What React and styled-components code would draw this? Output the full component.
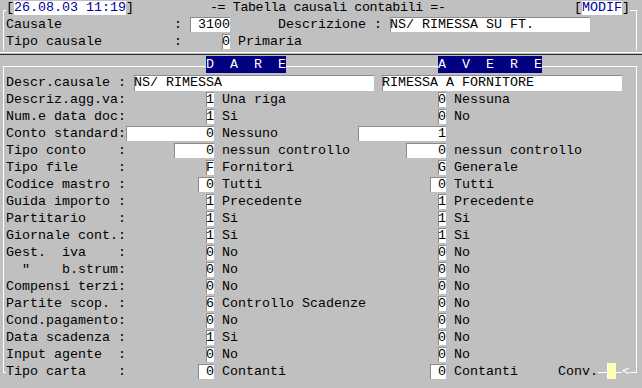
import styled, { createGlobalStyle } from "styled-components"

const CH = 8
const w = (n) => `${n * CH}px`

const GlobalStyle = createGlobalStyle`
  html, body {
    margin: 0;
    padding: 0;
    background: #c0c0c0;
  }
  body {
    font-family: "Liberation Mono", "Courier New", monospace;
    font-size: 13.333px;
    line-height: 17px;
    color: #000;
  }
`

const Screen = styled.div`
  width: 642px;
  height: 388px;
  overflow: hidden;
  background: #c0c0c0;
`

const TopFrame = styled.div`
  margin: 10px 5px 0 3px;
  border: 1px solid #fff;
  border-bottom: none;
  padding-left: 2px;
`

const TitleRow = styled.div`
  display: flex;
  align-items: center;
  height: 16px;
  line-height: 16px;
  margin: -11px 6px 0 0;
  background: #c0c0c0;
  white-space: pre;
`

const Mark = styled.span`
  display: inline-block;
  height: 14px;
  line-height: 14px;
  background: #fff;
  color: #0000a0;
`

const Title = styled.span`
  margin-left: 76px;
  letter-spacing: -0.4px;
`

const Push = styled.span`
  margin-left: auto;
`

const Row = styled.div`
  display: flex;
  align-items: center;
  height: 17px;
  white-space: pre;
`

const Txt = styled.span`
  display: inline-block;
  flex: none;
  width: ${(p) => (p.$w ? w(p.$w) : "auto")};
  white-space: pre;
  color: ${(p) => p.$color || "inherit"};
`

const Field = styled.span`
  display: inline-block;
  flex: none;
  width: ${(p) => w(p.$w)};
  height: ${(p) => (p.$tall ? 16 : 15)}px;
  line-height: ${(p) => (p.$tall ? 16 : 15)}px;
  background: #fff;
  text-align: ${(p) => (p.$left ? "left" : "right")};
  box-shadow: inset 1px 1px 0 #8c8c8c;
  white-space: pre;
  overflow: hidden;
`

const Separator = styled.div`
  margin-top: 2px;
  height: 1px;
  border-top: 1px solid #fff;
  border-bottom: 1px solid #2a2a2a;
`

const MainFrame = styled.div`
  margin: 11px 5px 0 3px;
  border: 1px solid #fff;
  border-bottom: none;
  padding-left: 2px;
`

const HeaderRow = styled.div`
  display: flex;
  align-items: flex-start;
  height: 18px;
  margin-top: -11px;
`

const Tag = styled.span`
  display: inline-block;
  margin-left: ${(p) => w(p.$at)};
  width: ${(p) => w(p.$w)};
  height: 17px;
  line-height: 17px;
  background: #000080;
  color: #fff;
  white-space: pre;
`

const DataRow = styled.div`
  display: grid;
  grid-template-columns: 120px 88px 144px 88px 1fr;
  align-items: center;
  height: 17px;
  flex: 1;
`

const ValCell = styled.div`
  display: flex;
  justify-content: flex-end;
  align-items: center;
  min-width: 0;
`

const Desc = styled.span`
  padding-left: 8px;
  white-space: pre;
  min-width: 0;
  overflow: visible;
`

const FooterRow = styled.div`
  display: flex;
  align-items: center;
  height: 17px;
  margin: 0 5px 0 3px;
`

const Corner = styled.span`
  flex: none;
  align-self: flex-start;
  box-sizing: border-box;
  width: ${(p) => p.$w}px;
  height: 10px;
  border-bottom: 1px solid #fff;
  border-left: ${(p) => (p.$side === "left" ? "1px solid #fff" : "none")};
  border-right: ${(p) => (p.$side === "right" ? "1px solid #fff" : "none")};
`

const Tail = styled.div`
  display: flex;
  align-items: center;
  height: 17px;
  flex: none;
`

const Lamp = styled.span`
  flex: none;
  align-self: flex-start;
  width: 9px;
  height: 16px;
  background: #ffffb4;
  box-shadow: inset 1px 0 0 #fffff0;
`

const rows = [
  ["Descriz.agg.va:", "1", 1, "Una riga", "0", 1, "Nessuna"],
  ["Num.e data doc:", "1", 1, "Si", "0", 1, "No"],
  ["Conto standard:", "0", 11, "Nessuno", "1", 11, ""],
  ["Tipo conto    :", "0", 5, "nessun controllo", "0", 5, "nessun controllo"],
  ["Tipo file     :", "F", 1, "Fornitori", "G", 1, "Generale"],
  ["Codice mastro :", "0", 2, "Tutti", "0", 2, "Tutti"],
  ["Guida importo :", "1", 1, "Precedente", "1", 1, "Precedente"],
  ["Partitario    :", "1", 1, "Si", "1", 1, "Si"],
  ["Giornale cont.:", "1", 1, "Si", "1", 1, "Si"],
  ["Gest.  iva    :", "0", 1, "No", "0", 1, "No"],
  ['  "    b.strum:', "0", 1, "No", "0", 1, "No"],
  ["Compensi terzi:", "0", 1, "No", "0", 1, "No"],
  ["Partite scop. :", "6", 1, "Controllo Scadenze", "0", 1, "No"],
  ["Cond.pagamento:", "0", 1, "No", "0", 1, "No"],
  ["Data scadenza :", "1", 1, "Si", "0", 1, "No"],
  ["Input agente  :", "0", 1, "No", "0", 1, "No"],
]

function Line({ r }) {
  const [label, dv, dw, dd, av, aw, ad] = r
  return (
    <DataRow>
      <Txt>{label}</Txt>
      <ValCell>
        <Field $w={dw}>{dv}</Field>
      </ValCell>
      <Desc>{dd}</Desc>
      <ValCell>
        <Field $w={aw}>{av}</Field>
      </ValCell>
      <Desc>{ad}</Desc>
    </DataRow>
  )
}

export default function App() {
  return (
    <Screen>
      <GlobalStyle />
      <TopFrame>
        <TitleRow>
          <Txt>[</Txt>
          <Mark>26.08.03 11:19</Mark>
          <Txt>]</Txt>
          <Title>-= Tabella causali contabili =-</Title>
          <Push>[</Push>
          <Mark>MODIF</Mark>
          <Txt>]</Txt>
        </TitleRow>
        <Row>
          <Txt $w={21}>Causale</Txt>
          <Txt $w={2}>:</Txt>
          <Field $w={5}>3100</Field>
          <Txt $w={6}></Txt>
          <Txt $w={14}>Descrizione :</Txt>
          <Field $w={25} $left>NS/ RIMESSA SU FT.</Field>
        </Row>
        <Row>
          <Txt $w={21}>Tipo causale</Txt>
          <Txt $w={6}>:</Txt>
          <Field $w={1}>0</Field>
          <Txt $w={1}></Txt>
          <Txt>Primaria</Txt>
        </Row>
      </TopFrame>
      <Separator />
      <MainFrame>
        <HeaderRow>
          <Tag $at={25} $w={10}>D  A  R  E</Tag>
          <Tag $at={19} $w={13}>A  V  E  R  E</Tag>
        </HeaderRow>
        <Row>
          <Txt $w={16}>Descr.causale :</Txt>
          <Field $w={30} $left $tall>NS/ RIMESSA</Field>
          <Txt $w={1}></Txt>
          <Field $w={30} $left $tall>RIMESSA A FORNITORE</Field>
        </Row>
        {rows.map((r) => (
          <Line key={r[0]} r={r} />
        ))}
      </MainFrame>
      <FooterRow>
        <Corner $w={3} $side="left" />
        <Line r={["Tipo carta    :", "0", 2, "Contanti", "0", 2, "Contanti"]} />
        <Tail>
          <Txt $w={5}>Conv.</Txt>
          <Corner $w={9} />
          <Lamp />
          <Corner $w={6} />
          <Txt $w={1} $color="#fff">&lt;</Txt>
          <Corner $w={7} $side="right" />
        </Tail>
      </FooterRow>
    </Screen>
  )
}
